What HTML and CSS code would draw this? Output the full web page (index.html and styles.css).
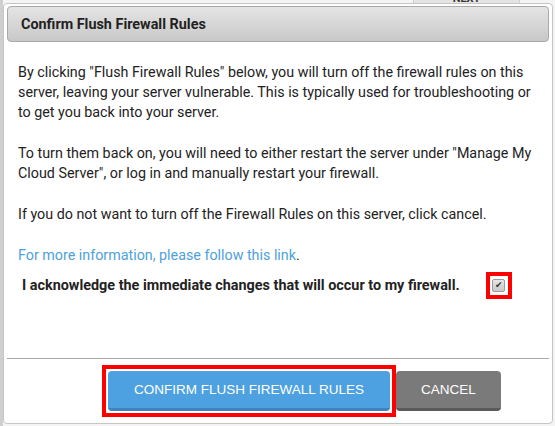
FILE: index.html
```html
<!DOCTYPE html>
<html lang="en">
<head>
  <meta charset="UTF-8">
  <meta name="viewport" content="width=device-width, initial-scale=1.0">
  <title>Confirm Flush Firewall Rules</title>
  <link rel="stylesheet" href="styles.css">
</head>
<body>

  <!-- page behind the modal -->
  <div class="page-behind">
    <span class="next-btn">NEXT</span>
  </div>

  <div class="dialog">
    <div class="dialog-header">
      <h2>Confirm Flush Firewall Rules</h2>
    </div>

    <div class="dialog-body">
      <p>By clicking "Flush Firewall Rules" below, you will turn off the firewall rules on this server, leaving your server vulnerable. This is typically used for troubleshooting or to get you back into your server.</p>
      <p>To turn them back on, you will need to either restart the server under "Manage My Cloud Server", or log in and manually restart your firewall.</p>
      <p>If you do not want to turn off the Firewall Rules on this server, click cancel.</p>
      <p class="last"><a href="#">For more information, please follow this link</a>.</p>

      <label class="ack">
        <span>I acknowledge the immediate changes that will occur to my firewall.</span>
        <span class="check-wrap"><span class="check-box">&#10004;</span></span>
      </label>
    </div>

    <div class="dialog-footer">
      <span class="highlight"><button class="btn btn-confirm">CONFIRM FLUSH FIREWALL RULES</button></span>
      <button class="btn btn-cancel">CANCEL</button>
    </div>
  </div>

</body>
</html>
```

FILE: styles.css
```css
body {
  margin: 0;
  background-color: #f4f4f4;
  font-family: Roboto, "Liberation Sans", sans-serif;
  color: #222;
}

.page-behind {
  position: absolute;
  top: 0;
  left: 0;
  width: 555px;
  height: 426px;
  border-left: 3px solid #cfcfcf;
  box-sizing: border-box;
}

.next-btn {
  position: absolute;
  top: -7px;
  left: 410px;
  width: 105px;
  height: 10px;
  background-color: #e4e4e4;
  border: 1px solid #cfcfcf;
  font-size: 11px;
  line-height: 10px;
  font-weight: bold;
  text-align: center;
  color: #333;
}

/* Modal */
.dialog {
  position: absolute;
  top: 3px;
  left: 3px;
  width: 550px;
  height: 421px;
  box-sizing: border-box;
  background-color: #fff;
  border: 1px solid #c6c6c6;
  border-radius: 4px;
  padding: 2px 3px;
  display: flex;
  flex-direction: column;
}

.dialog-header {
  height: 36px;
  box-sizing: border-box;
  border: 1px solid #aaa;
  border-radius: 4px;
  background: linear-gradient(#e4e4e4, #c8c8c8);
  display: flex;
  align-items: center;
  padding: 1px 0 0 13px;
}

.dialog-header h2 {
  margin: 0;
  font-size: 14.4px;
  font-weight: bold;
  color: #222;
}

.dialog-body {
  flex: 1;
  padding: 20px 8px 0 11px;
  font-size: 14.3px;
  line-height: 20px;
}

.dialog-body p {
  margin: 0 0 21px;
}

.dialog-body p.last {
  margin-bottom: 7px;
}

.dialog-body a {
  color: #4ea1dc;
  text-decoration: none;
}

.ack {
  display: flex;
  align-items: center;
  padding-left: 4px;
  font-size: 14.4px;
  font-weight: bold;
  color: #222;
}

.check-wrap {
  margin-left: 26px;
  width: 18px;
  height: 19px;
  border: 4px solid #f00;
  display: flex;
  align-items: center;
  justify-content: center;
}

.check-box {
  width: 13px;
  height: 13px;
  box-sizing: border-box;
  border: 1px solid #9a9a9a;
  border-radius: 2px;
  background: linear-gradient(#e6e6e6, #c9c9c9);
  color: #333;
  font-family: "DejaVu Sans", sans-serif;
  font-size: 9px;
  line-height: 11px;
  text-align: center;
}

.dialog-footer {
  border-top: 1px solid #aaa;
  height: 63px;
  box-sizing: border-box;
  display: flex;
  justify-content: flex-end;
  align-items: flex-start;
  padding: 6px 48px 0 0;
}

.highlight {
  border: 4px solid #f00;
  padding: 2px;
  display: flex;
}

.btn {
  height: 40px;
  border: none;
  border-radius: 4px;
  color: #fff;
  font-family: "Liberation Sans", Arial, sans-serif;
  font-size: 13.5px;
  cursor: pointer;
}

.btn-confirm {
  width: 282px;
  background-color: #4ea1e0;
  border-bottom: 3px solid #3f84bd;
}

.btn-cancel {
  margin-top: 6px;
  width: 105px;
  background-color: #7a7a7a;
  border-bottom: 3px solid #5a5a5a;
}
```
